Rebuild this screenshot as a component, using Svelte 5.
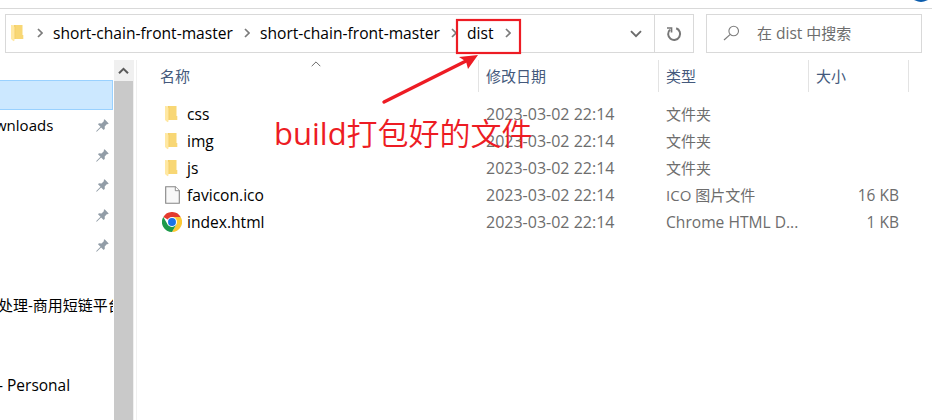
<script>
  const crumbs = [
    { name: 'short-chain-front-master', width: 180 },
    { name: 'short-chain-front-master', width: 180 },
    { name: 'dist', width: 27 }
  ];
  const pins = [
    { label: 'wnloads', pin: true },
    { label: '', pin: true },
    { label: '', pin: true },
    { label: '', pin: true },
    { label: '', pin: true },
    { label: '' },
    { label: '处理-商用短链平台', cjk: true },
    { label: '' },
    { label: '', gap: true },
    { label: '- Personal', dash: true }
  ];
  const date = '2023-03-02 22:14';
  const files = [
    { name: 'css', kind: 'folder', type: '文件夹', size: '' },
    { name: 'img', kind: 'folder', type: '文件夹', size: '' },
    { name: 'js', kind: 'folder', type: '文件夹', size: '' },
    { name: 'favicon.ico', kind: 'file', type: 'ICO 图片文件', size: '16 KB' },
    { name: 'index.html', kind: 'chrome', type: 'Chrome HTML D...', size: '1 KB' }
  ];
</script>

{#snippet folder()}
  <svg class="folder" width="13" height="18" viewBox="0 0 13 18">
    <path d="M2.500 1h9v10h.8v4H2.500z" fill="#f8d775" />
    <path d="M3 1h1.500v14H3z" fill="#f0c75c" opacity=".5" />
    <path d="M0 1h1.500l2 2v13.500l-1 .7L0 15z" fill="#ffe8a2" />
  </svg>
{/snippet}

{#snippet chevron()}
  <svg class="chev" width="6" height="10" viewBox="0 0 6 10">
    <path d="M1 1l4 4-4 4" fill="none" stroke="#7b7b7b" stroke-width="1.7" />
  </svg>
{/snippet}

<div class="window">
  <div class="ribbon">
    <svg width="16" height="2" viewBox="0 0 16 2"><path d="M1 0h14L11 1.6Q8 2.4 5 1.6z" fill="#0b5cad" /></svg>
  </div>

  <div class="toolbar">
    <div class="address">
      <div class="path">
        {@render folder()}
        {#each crumbs as c}
          <span class="sep">{@render chevron()}</span>
          <span class="crumb" style="width:{c.width}px">{c.name}</span>
        {/each}
        <span class="sep last">{@render chevron()}</span>
      </div>
      <svg class="drop" width="12" height="8" viewBox="0 0 12 8">
        <path d="M1 1.2l5 5 5-5" fill="none" stroke="#6b6b6b" stroke-width="1.9" />
      </svg>
      <div class="refresh">
        <svg width="16" height="16" viewBox="0 0 16 16">
          <path d="M10.200 2.300A6 6 0 1 1 4 3.600" fill="none" stroke="#777" stroke-width="2" />
          <path d="M1 2h4.500v4.500" fill="none" stroke="#777" stroke-width="1.700" />
        </svg>
      </div>
    </div>
    <div class="search">
      <svg width="17" height="16" viewBox="0 0 17 16">
        <circle cx="10.7" cy="6" r="4.8" fill="none" stroke="#7d7d7d" stroke-width="1.1" />
        <path d="M7.3 9.4L1 15" stroke="#7d7d7d" stroke-width="1.2" />
      </svg>
      <span>在 <span class="latin">dist</span> 中搜索</span>
    </div>
  </div>

  <div class="content">
    <nav>
      <div class="tree">
        <div class="selected"></div>
        {#each pins as p}
          <div class="item" class:gap={p.gap}>
            <span class:cjk={p.cjk} class:dash={p.dash}>{p.label}</span>
            {#if p.pin}
              <svg width="13" height="13" viewBox="0 0 13 13">
                <path d="M8.6.3l4.1 4.1-1 .9-.7-.3-2.3 2.4.1 2.4-1.1 1.2-2.6-2.6L1 12.6l-.7.1v-.8L4.5 7.8 2 5.3l1-1 2.5.1L8 2 7.7 1.1z" fill="#929da7" />
              </svg>
            {/if}
          </div>
        {/each}
      </div>
      <div class="scroll">
        <div class="up">
          <svg width="11" height="8" viewBox="0 0 11 8">
            <path d="M1 6.3l4.5-4.5L10 6.3" fill="none" stroke="#5a5a5a" stroke-width="2" />
          </svg>
        </div>
        <div class="thumb"></div>
      </div>
    </nav>

    <main>
      <div class="head">
        <div class="c-name">
          名称
          <svg class="sort" width="10" height="6" viewBox="0 0 10 6">
            <path d="M.7 5.2L5 .9l4.3 4.3" fill="none" stroke="#6b6b6b" />
          </svg>
        </div>
        <div class="c-date">修改日期</div>
        <div class="c-type">类型</div>
        <div class="c-size">大小</div>
      </div>
      {#each files as f}
        <div class="row">
          <div class="c-name">
            <span class="icon">
              {#if f.kind === 'folder'}
                {@render folder()}
              {:else if f.kind === 'file'}
                <svg class="doc" width="15" height="18" viewBox="0 0 15 18">
                  <path d="M.7.7h9.6l4 4v12.6H.7z" fill="#f8f8f8" stroke="#858585" stroke-width="1.1" />
                  <path d="M10.3.7v4h4" fill="#fff" stroke="#858585" stroke-width=".9" />
                </svg>
              {:else}
                <svg class="chrome" width="20" height="20" viewBox="0 0 48 48">
                  <path d="M24 24L3.2 12A24 24 0 0 1 44.8 12z" fill="#e33b2e" />
                  <path d="M24 24V12h20.8A24 24 0 0 1 24 48l10.4-18z" fill="#fcc934" />
                  <path d="M24 24l10.4 6L24 48A24 24 0 0 1 3.2 12l10.4 18z" fill="#1e9a4b" />
                  <circle cx="24" cy="24" r="12" fill="#fff" />
                  <circle cx="24" cy="24" r="9.5" fill="#1a73e8" />
                </svg>
              {/if}
            </span>
            <span class="fname">{f.name}</span>
          </div>
          <div class="c-date">{date}</div>
          <div class="c-type" class:latin={f.kind === 'chrome'}>{f.type}</div>
          <div class="c-size">{f.size}</div>
        </div>
      {/each}
    </main>
  </div>

  <svg class="marks" width="932" height="420" viewBox="0 0 932 420">
    <rect x="457" y="20" width="63" height="33" fill="none" stroke="#ed1c24" stroke-width="2.2" />
    <path d="M384 102L466 61" stroke="#ed1c24" stroke-width="3.4" stroke-linecap="round" />
    <path d="M478 55L468 69 466 61.500 459 57z" fill="#ed1c24" />
  </svg>
  <div class="note"><span>build</span>打包好的文件</div>
</div>

<style>
  :global(body) { margin: 0; overflow: hidden; }
  .window {
    position: relative; width: 932px; height: 420px; overflow: hidden;
    display: flex; flex-direction: column; background: #fff; color: #000;
    font: 15px/20px "Open Sans", "Noto Sans CJK SC", sans-serif;
    white-space: nowrap;
  }
  .window * { box-sizing: border-box; }
  svg { display: block; flex: none; }
  .latin, .crumb, .fname { font-size: 15.6px; }
  .ribbon { height: 9px; flex: none; border-bottom: 1px solid #d9d9d9; display: flex; justify-content: flex-end; padding-right: 3px; }
  .toolbar { display: flex; flex: none; gap: 12px; padding: 5px 10px 7px 5px; }
  .address { display: flex; align-items: center; width: 689px; height: 39px; border: 1px solid #d9d9d9; }
  .path { display: flex; align-items: center; flex: 1; padding: 0 0 2px 5px; }
  .sep { display: flex; width: 30px; flex: none; padding-left: 13px; }
  .path > .sep:not(:nth-child(2)) { width: 27px; padding-left: 11px; }
  .path > .sep:nth-child(2) { width: 29px; }
  .drop { margin-right: 12px; }
  .refresh { width: 39px; height: 37px; border-left: 1px solid #d9d9d9; display: flex; align-items: center; justify-content: center; }
  .search { display: flex; align-items: center; gap: 17px; width: 216px; height: 39px; border: 1px solid #d9d9d9; padding: 0 0 2px 16px; color: #6d6d6d; }
  .content { display: flex; flex: 1; min-height: 0; }
  nav { display: flex; width: 137px; border-right: 1px solid #f0f0f0; }
  .tree { width: 113px; margin-right: 1px; padding-top: 20px; overflow: hidden; }
  .selected { width: 113px; height: 30px; background: #cce8ff; border: 1px solid #99d1ff; border-left: 0; }
  .item { display: flex; align-items: center; justify-content: space-between; height: 30px; padding-right: 4px; }
  .item.gap { height: 20px; }
  .item span { margin-left: -5px; }
  .item .cjk { margin-left: -2px; }
  .item .dash { margin-left: -2px; font-size: 15.5px; }
  .scroll { width: 20px; background: #f0f0f0; }
  .up { width: 19px; height: 21px; display: flex; align-items: center; justify-content: center; }
  .thumb { width: 19px; height: 339px; background: #c9c9c9; }
  main { flex: 1; }
  .head, .row { display: flex; align-items: center; }
  .head { height: 32px; margin-bottom: 8px; color: #44597c; }
  .head > div { height: 32px; line-height: 32px; border-right: 1px solid #e3e3e3; }
  .row { height: 27px; color: #6d6d6d; }
  .c-name { width: 342px; padding-left: 23px; }
  .c-date { width: 180px; padding-left: 7px; }
  .row .c-date { font-size: 16px; }
  .c-type { width: 150px; padding-left: 7px; }
  .c-size { width: 100px; padding-left: 7px; }
  .row .c-name { display: flex; align-items: center; }
  .row .c-size { text-align: right; padding-right: 10px; font-size: 15.5px; }
  .head .c-name { position: relative; }
  .sort { position: absolute; left: 174px; top: 1px; }
  .icon { width: 27px; display: flex; padding-left: 5px; }
  .icon .chrome { margin-left: -3px; }
  .fname { color: #000; }
  .marks { position: absolute; left: 0; top: 0; }
  .note { position: absolute; left: 274px; top: 113px; font-size: 31px; line-height: 40px; color: #ed1c24; font-weight: 350; }
  .note span { font-weight: 400; }
</style>
